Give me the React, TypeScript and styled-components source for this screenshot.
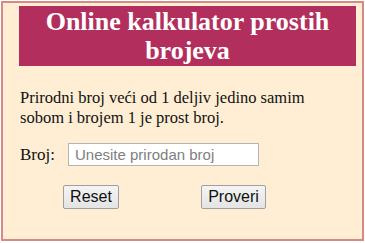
import React, { useState } from "react";
import styled, { createGlobalStyle } from "styled-components";

const GlobalStyle = createGlobalStyle`
  body {
    margin: 0;
    padding: 1px;
    font-family: "Liberation Serif", "Times New Roman", serif;
  }
`;

const StyledCalculator = styled.div`
  box-sizing: border-box;
  width: 363px;
  height: 240px;
  border: 2px solid #d58a88;
  background: #ffeed4;
  padding: 3px 6px 0 16px;
`;

const StyledTitle = styled.h1`
  margin: 0;
  background: #b22f5d;
  color: #ffffff;
  font-size: 26px;
  font-weight: bold;
  line-height: 29px;
  text-align: center;
  padding: 1px 6px 1px;
`;

const StyledText = styled.p`
  margin: 22px 0 0 1px;
  padding-right: 20px;
  font-size: 16.5px;
  line-height: 20px;
  color: #111111;
`;

const StyledRow = styled.div`
  display: flex;
  align-items: center;
  margin: 15px 0 0 1px;
`;

const StyledLabel = styled.label`
  font-size: 17px;
  color: #111111;
  width: 48px;
`;

const StyledInput = styled.input`
  box-sizing: border-box;
  width: 191px;
  height: 23px;
  border: 1px solid #b5b5b5;
  background: #ffffff;
  padding: 0 6px;
  font-family: "Liberation Sans", Arial, sans-serif;
  font-size: 15px;
  &::placeholder {
    color: #808080;
  }
`;

const StyledButtons = styled.div`
  display: flex;
  margin: 19px 0 0 44px;
  gap: 82px;
`;

const StyledButton = styled.button<{ $width: number }>`
  box-sizing: border-box;
  width: ${({ $width }) => $width}px;
  height: 24px;
  border: 1px solid #a0a0a0;
  border-radius: 2px;
  background: linear-gradient(#f4f4f4, #e4e4e4);
  font-family: "Liberation Sans", Arial, sans-serif;
  font-size: 16px;
  color: #111111;
  padding: 0;
`;

export default function App() {
  const [value, setValue] = useState("");
  return (
    <>
      <GlobalStyle />
      <StyledCalculator>
        <StyledTitle>Online kalkulator prostih brojeva</StyledTitle>
        <StyledText>
          Prirodni broj veći od 1 deljiv jedino samim sobom i brojem 1 je prost broj.
        </StyledText>
        <StyledRow>
          <StyledLabel htmlFor="broj">Broj:</StyledLabel>
          <StyledInput
            id="broj"
            placeholder="Unesite prirodan broj"
            value={value}
            onChange={(e) => setValue(e.target.value)}
          />
        </StyledRow>
        <StyledButtons>
          <StyledButton $width={56} onClick={() => setValue("")}>
            Reset
          </StyledButton>
          <StyledButton $width={65}>Proveri</StyledButton>
        </StyledButtons>
      </StyledCalculator>
    </>
  );
}
